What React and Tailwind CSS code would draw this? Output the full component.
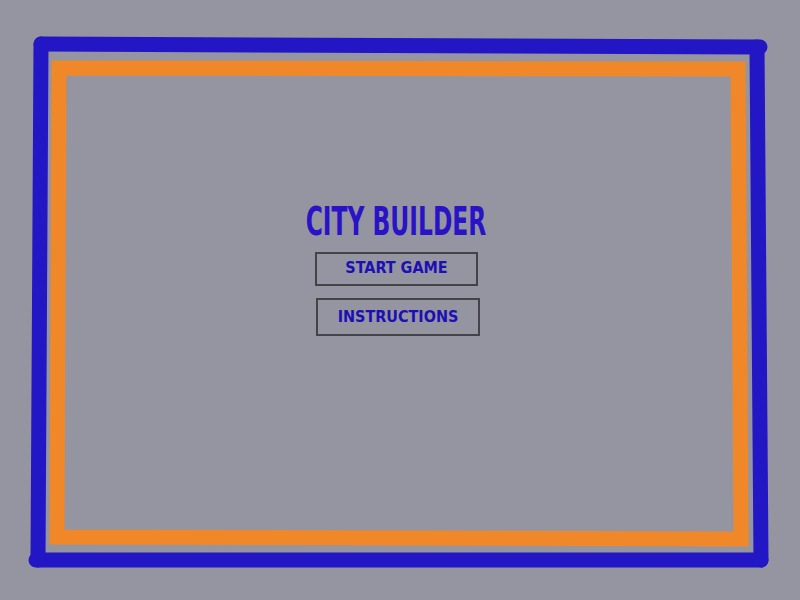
import React from 'react';

const font = { fontFamily: '"DejaVu Sans Condensed", "DejaVu Sans", sans-serif' };

// hand-drawn frame around the menu
const Frame = () => (
  <svg className="absolute inset-0 pointer-events-none" width="800" height="600" viewBox="0 0 800 600">
    <path d="M59 68 L738 69 L741 539 L57 537 Z" fill="none" stroke="#f0882a" strokeWidth="15" strokeLinejoin="miter" />
    <g stroke="#2316c4" strokeWidth="15" strokeLinecap="round" fill="none">
      <line x1="41" y1="44" x2="760" y2="47" />
      <line x1="757" y1="47" x2="761" y2="560" />
      <line x1="761" y1="560" x2="36" y2="560" />
      <line x1="38" y1="560" x2="41" y2="44" />
    </g>
  </svg>
);

const MenuButton = ({ label, className }) => (
  <button
    className={`border-2 border-[#444448] bg-transparent text-[#1c10b4] text-[16px] font-bold leading-none flex items-center justify-center ${className}`}
    style={font}
  >
    {label}
  </button>
);

export default function App() {
  return (
    <div className="relative w-[800px] h-[600px] bg-[#9495a1] overflow-hidden">
      <Frame />
      <div className="relative flex flex-col items-center pt-[209px]">
        <h1
          className="text-[26px] font-bold leading-[26px] text-[#2a12c6] scale-y-[1.47] ml-[-8px]"
          style={font}
        >
          CITY BUILDER
        </h1>
        <MenuButton label="START GAME" className="mt-[17px] w-[163px] h-[34px] ml-[-7px] pb-[3px]" />
        <MenuButton label="INSTRUCTIONS" className="mt-[12px] w-[164px] h-[38px] ml-[-4px]" />
      </div>
    </div>
  );
}
